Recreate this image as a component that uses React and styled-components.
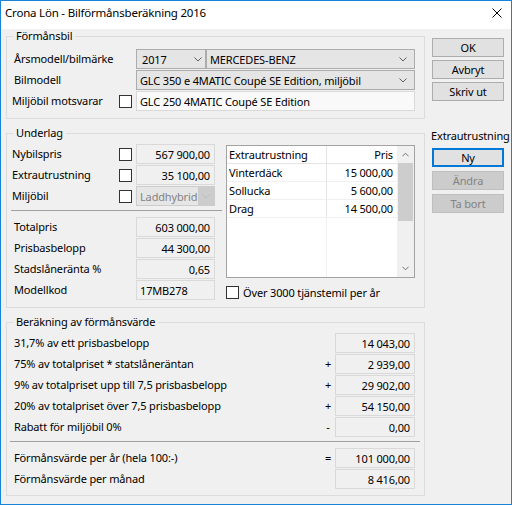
import React from "react";
import styled, { createGlobalStyle } from "styled-components";

const GlobalStyle = createGlobalStyle`
  html, body {
    margin: 0;
    padding: 0;
    background: #ffffff;
  }
  body {
    font-family: "Noto Sans", "Open Sans", "DejaVu Sans", sans-serif;
    font-size: 11px;
    letter-spacing: -0.15px;
    color: #000000;
  }
  * {
    box-sizing: border-box;
  }
`;

const Window = styled.div`
  width: 512px;
  height: 505px;
  border: 1px solid #1883d7;
  background: #f0f0f0;
  display: flex;
  flex-direction: column;
  overflow: hidden;
`;

const TitleBar = styled.div`
  flex: none;
  height: 28px;
  background: #ffffff;
  display: flex;
  align-items: flex-start;
  justify-content: space-between;
  padding: 4px 9px 0 4px;
`;

const Title = styled.div`
  font-size: 11.5px;
  letter-spacing: -0.2px;
  line-height: 16px;
`;

const CloseIcon = styled.svg`
  margin-top: 3px;
`;

const Body = styled.div`
  flex: 1;
  display: flex;
  gap: 7px;
  padding: 0 7px 0 5px;
`;

const MainCol = styled.div`
  width: 419px;
  display: flex;
  flex-direction: column;
`;

const SideCol = styled.div`
  width: 72px;
  display: flex;
  flex-direction: column;
  padding-top: 9px;
`;

const Group = styled.fieldset`
  margin: ${(p) => p.$mt || 0}px 0 0;
  padding: ${(p) => p.$pt}px 9px ${(p) => p.$pb}px 5px;
  border: 1px solid #dcdcdc;
  min-width: 0;
`;

const Legend = styled.legend`
  padding: 0 3px;
  margin-left: 1px;
  line-height: 14px;
`;

const FormRow = styled.div`
  height: 21px;
  display: grid;
  grid-template-columns: ${(p) => p.$cols};
  align-items: start;
`;

const Label = styled.div`
  height: 20px;
  line-height: 20px;
  padding-left: ${(p) => p.$indent || 0}px;
  white-space: nowrap;
`;

const Sign = styled(Label)`
  text-align: center;
`;

const CheckCell = styled.div`
  height: 20px;
  display: flex;
  align-items: center;
`;

const Checkbox = styled.span`
  display: inline-block;
  width: 13px;
  height: 13px;
  border: 1px solid #333333;
  background: #ffffff;
  flex: none;
`;

const Field = styled.div`
  height: 20px;
  border: 1px solid #d9d9d9;
  background: ${(p) => p.$bg || "#f0f0f0"};
  display: flex;
  align-items: center;
  justify-content: ${(p) => (p.$left ? "flex-start" : "flex-end")};
  padding: 0 4px 0 3px;
  white-space: nowrap;
  overflow: hidden;
`;

const ComboPair = styled.div`
  display: flex;
`;

const Combo = styled.div`
  height: 20px;
  width: ${(p) => (p.$w ? `${p.$w}px` : "auto")};
  flex: ${(p) => (p.$w ? "none" : "1")};
  border: 1px solid ${(p) => (p.$disabled ? "#cccccc" : "#acacac")};
  background: ${(p) => (p.$disabled ? "#e6e6e6" : "#e5e5e5")};
  color: ${(p) => (p.$disabled ? "#838383" : "#000000")};
  display: flex;
  align-items: center;
  padding-left: ${(p) => p.$pl ?? 3}px;
  white-space: nowrap;
  overflow: hidden;
`;

const ComboText = styled.span`
  flex: 1;
  overflow: hidden;
`;

const ComboArrow = styled.span`
  flex: none;
  width: ${(p) => p.$w || 17}px;
  height: 100%;
  margin-right: ${(p) => p.$mr || 0}px;
  display: flex;
  align-items: center;
  justify-content: center;
  background: ${(p) => (p.$disabled ? "#cccccc" : "transparent")};
`;

const Separator = styled.div`
  height: 1px;
  background: #a0a0a0;
  margin: 3px ${(p) => p.$mr || 0}px 6px ${(p) => p.$ml || 0}px;
`;

const UnderlagBody = styled.div`
  display: flex;
  gap: 4px;
`;

const LeftCol = styled.div`
  width: 210px;
  display: flex;
  flex-direction: column;
`;

const TablePane = styled.div`
  flex: 1;
  display: flex;
  flex-direction: column;
  padding-top: 1px;
`;

const Table = styled.div`
  height: 133px;
  border: 1px solid #a3a3a3;
  background: #ffffff;
  display: flex;
`;

const TableBody = styled.div`
  flex: 1;
  display: flex;
  flex-direction: column;
`;

const TableRow = styled.div`
  height: 18px;
  display: grid;
  grid-template-columns: 100px 1fr;
  border-bottom: 1px solid ${(p) => (p.$head ? "#e5e5e5" : "#f0f0f0")};
`;

const Cell = styled.div`
  line-height: 17px;
  padding: ${(p) => (p.$right ? "0 4px 0 0" : "0 0 0 2px")};
  text-align: ${(p) => (p.$right ? "right" : "left")};
  border-right: ${(p) => (p.$right ? "none" : "1px solid #e5e5e5")};
  white-space: nowrap;
`;

const Filler = styled.div`
  flex: 1;
  display: grid;
  grid-template-columns: 100px 1fr;
`;

const FillerCol = styled.div`
  border-right: 1px solid #f0f0f0;
`;

const Scrollbar = styled.div`
  width: 17px;
  background: #f0f0f0;
  display: flex;
  flex-direction: column;
`;

const ScrollArrow = styled.div`
  height: 17px;
  display: flex;
  align-items: center;
  justify-content: center;
`;

const ScrollThumb = styled.div`
  height: 58px;
  margin: 0 1px;
  background: #cdcdcd;
`;

const ScrollTrack = styled.div`
  flex: 1;
`;

const CheckRow = styled.div`
  margin-top: 8px;
  display: flex;
  align-items: center;
  gap: 4px;
  height: 13px;
`;

const Button = styled.div`
  height: 19px;
  margin-top: ${(p) => p.$mt || 0}px;
  border: ${(p) =>
    p.$focused
      ? "2px solid #0078d7"
      : `1px solid ${p.$disabled ? "#bfbfbf" : "#adadad"}`};
  background: ${(p) => (p.$disabled ? "#cccccc" : "#e1e1e1")};
  color: ${(p) => (p.$disabled ? "#838383" : "#000000")};
  display: flex;
  align-items: center;
  justify-content: center;
`;

const SideLabel = styled.div`
  margin: 28px 0 0 -1px;
  line-height: 14px;
  white-space: nowrap;
`;

const Chevron = ({ up, color = "#606060", w = 8 }) => (
  <svg width={w} height="5" viewBox="0 0 8 5">
    <polyline
      points={up ? "0.5,4.5 4,1 7.5,4.5" : "0.5,0.5 4,4 7.5,0.5"}
      fill="none"
      stroke={color}
      strokeWidth="1"
    />
  </svg>
);

const extras = [
  ["Vinterdäck", "15 000,00"],
  ["Sollucka", "5 600,00"],
  ["Drag", "14 500,00"],
];

const calcRows = [
  ["31,7% av ett prisbasbelopp", "", "14 043,00"],
  ["75% av totalpriset * statslåneräntan", "+", "2 939,00"],
  ["9% av totalpriset upp till 7,5 prisbasbelopp", "+", "29 902,00"],
  ["20% av totalpriset över 7,5 prisbasbelopp", "+", "54 150,00"],
  ["Rabatt för miljöbil 0%", "-", "0,00"],
];

const underlagCols = "107px 17px 79px";
const calcCols = "1fr 14px 80px";

export default function App() {
  return (
    <>
      <GlobalStyle />
      <Window>
        <TitleBar>
          <Title>Crona Lön - Bilförmånsberäkning 2016</Title>
          <CloseIcon width="10" height="10" viewBox="0 0 10 10">
            <path d="M0.5 0.5 L9.5 9.5 M9.5 0.5 L0.5 9.5" stroke="#000" strokeWidth="1" />
          </CloseIcon>
        </TitleBar>
        <Body>
          <MainCol>
            <Group $pt={6} $pb={6}>
              <Legend>Förmånsbil</Legend>
              <FormRow $cols="107px 17px 1fr">
                <Label $indent={2}>Årsmodell/bilmärke</Label>
                <span />
                <ComboPair>
                  <Combo $w={70} $pl={5}>
                    <ComboText>2017</ComboText>
                    <ComboArrow $mr={-1}>
                      <Chevron />
                    </ComboArrow>
                  </Combo>
                  <Combo>
                    <ComboText>MERCEDES-BENZ</ComboText>
                    <ComboArrow $mr={3}>
                      <Chevron />
                    </ComboArrow>
                  </Combo>
                </ComboPair>
              </FormRow>
              <FormRow $cols="107px 17px 1fr">
                <Label $indent={2}>Bilmodell</Label>
                <span />
                <Combo>
                  <ComboText>GLC 350 e 4MATIC Coupé SE Edition, miljöbil</ComboText>
                  <ComboArrow $mr={3}>
                    <Chevron />
                  </ComboArrow>
                </Combo>
              </FormRow>
              <FormRow $cols="107px 17px 1fr">
                <Label>Miljöbil motsvarar</Label>
                <CheckCell>
                  <Checkbox />
                </CheckCell>
                <Field $left $bg="#f9f9f9">
                  GLC 250 4MATIC Coupé SE Edition
                </Field>
              </FormRow>
            </Group>

            <Group $mt={7} $pt={4} $pb={6}>
              <Legend>Underlag</Legend>
              <UnderlagBody>
                <LeftCol>
                  <FormRow $cols={underlagCols}>
                    <Label>Nybilspris</Label>
                    <CheckCell>
                      <Checkbox />
                    </CheckCell>
                    <Field>567 900,00</Field>
                  </FormRow>
                  <FormRow $cols={underlagCols}>
                    <Label>Extrautrustning</Label>
                    <CheckCell>
                      <Checkbox />
                    </CheckCell>
                    <Field>35 100,00</Field>
                  </FormRow>
                  <FormRow $cols={underlagCols}>
                    <Label>Miljöbil</Label>
                    <CheckCell>
                      <Checkbox />
                    </CheckCell>
                    <Combo $disabled>
                      <ComboText>Laddhybrid</ComboText>
                      <ComboArrow $disabled $w={16}>
                        <Chevron color="#bdbdbd" />
                      </ComboArrow>
                    </Combo>
                  </FormRow>
                  <Separator $ml={-1} />
                  <FormRow $cols={underlagCols}>
                    <Label $indent={2}>Totalpris</Label>
                    <span />
                    <Field>603 000,00</Field>
                  </FormRow>
                  <FormRow $cols={underlagCols}>
                    <Label $indent={2}>Prisbasbelopp</Label>
                    <span />
                    <Field>44 300,00</Field>
                  </FormRow>
                  <FormRow $cols={underlagCols}>
                    <Label $indent={2}>Stadslåneränta %</Label>
                    <span />
                    <Field>0,65</Field>
                  </FormRow>
                  <FormRow $cols={underlagCols}>
                    <Label $indent={2}>Modellkod</Label>
                    <span />
                    <Field $left>17MB278</Field>
                  </FormRow>
                </LeftCol>
                <TablePane>
                  <Table>
                    <TableBody>
                      <TableRow $head>
                        <Cell>Extrautrustning</Cell>
                        <Cell $right>Pris</Cell>
                      </TableRow>
                      {extras.map(([name, price]) => (
                        <TableRow key={name}>
                          <Cell>{name}</Cell>
                          <Cell $right>{price}</Cell>
                        </TableRow>
                      ))}
                      <Filler>
                        <FillerCol />
                        <div />
                      </Filler>
                    </TableBody>
                    <Scrollbar>
                      <ScrollArrow>
                        <Chevron up w={7} />
                      </ScrollArrow>
                      <ScrollThumb />
                      <ScrollTrack />
                      <ScrollArrow>
                        <Chevron w={7} />
                      </ScrollArrow>
                    </Scrollbar>
                  </Table>
                  <CheckRow>
                    <Checkbox />
                    <span>Över 3000 tjänstemil per år</span>
                  </CheckRow>
                </TablePane>
              </UnderlagBody>
            </Group>

            <Group $mt={7} $pt={4} $pb={5}>
              <Legend>Beräkning av förmånsvärde</Legend>
              {calcRows.map(([label, sign, value]) => (
                <FormRow key={label} $cols={calcCols}>
                  <Label $indent={2}>{label}</Label>
                  <Sign>{sign}</Sign>
                  <Field>{value}</Field>
                </FormRow>
              ))}
              <Separator $ml={-2} $mr={-5} />
              <FormRow $cols={calcCols}>
                <Label $indent={2}>Förmånsvärde per år (hela 100:-)</Label>
                <Sign>=</Sign>
                <Field>101 000,00</Field>
              </FormRow>
              <FormRow $cols={calcCols}>
                <Label $indent={2}>Förmånsvärde per månad</Label>
                <span />
                <Field>8 416,00</Field>
              </FormRow>
            </Group>
          </MainCol>

          <SideCol>
            <Button>OK</Button>
            <Button $mt={3}>Avbryt</Button>
            <Button $mt={3}>Skriv ut</Button>
            <SideLabel>Extrautrustning</SideLabel>
            <Button $mt={5} $focused>
              Ny
            </Button>
            <Button $mt={4} $disabled>
              Ändra
            </Button>
            <Button $mt={4} $disabled>
              Ta bort
            </Button>
          </SideCol>
        </Body>
      </Window>
    </>
  );
}
